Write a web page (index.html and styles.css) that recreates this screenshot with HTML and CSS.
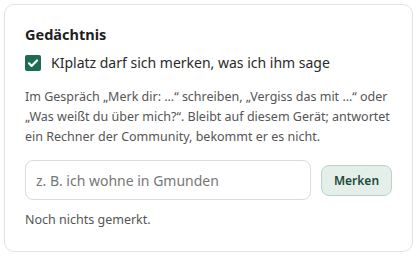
FILE: index.html
```html
<!DOCTYPE html>
<html lang="de">
<head>
  <meta charset="UTF-8">
  <title>Gedächtnis</title>
  <link rel="stylesheet" href="styles.css">
</head>
<body>
  <div class="card">
    <h3 class="card-title">Gedächtnis</h3>
    <label class="check-row">
      <input type="checkbox" class="check" checked>
      <span class="check-box"><svg viewBox="0 0 16 16" width="16" height="16"><path d="M4 8.3l2.6 2.6L12 5.4" fill="none" stroke="#fff" stroke-width="2.2" stroke-linecap="round" stroke-linejoin="round"/></svg></span>
      <span>KIplatz darf sich merken, was ich ihm sage</span>
    </label>
    <p class="hint">Im Gespräch „Merk dir: …“ schreiben, „Vergiss das mit …“ oder „Was weißt du über mich?“. Bleibt auf diesem Gerät; antwortet ein Rechner der Community, bekommt er es nicht.</p>
    <div class="add-row">
      <input type="text" class="memory-input" placeholder="z. B. ich wohne in Gmunden">
      <button class="btn-save">Merken</button>
    </div>
    <div class="status">Noch nichts gemerkt.</div>
  </div>
</body>
</html>
```

FILE: styles.css
```css
body {
  margin: 4px;
  font-family: "Noto Sans", "Open Sans", sans-serif;
  background: #fff;
  color: #222;
}
.card {
  width: 367px;
  height: 207px;
  border: 1px solid #dfe3e2;
  border-radius: 10px;
  padding: 19px 20px 20px 20px;
}
.card-title {
  margin: 0 0 8px 0;
  font-size: 14.5px;
  font-weight: 700;
  line-height: 20px;
  color: #1e1e1e;
}
.check-row {
  display: flex;
  align-items: center;
  gap: 10px;
  font-size: 14px;
  line-height: 22px;
  color: #2a2a2a;
}
.check {
  display: none;
}
.check-box {
  width: 16px;
  height: 16px;
  border-radius: 2px;
  background: #1e6b52;
  display: flex;
}
.hint {
  margin: 13px 0 0 0;
  font-size: 12.5px;
  line-height: 20px;
  color: #555;
}
.add-row {
  display: flex;
  align-items: center;
  gap: 10px;
  margin-top: 13px;
}
.memory-input {
  width: 286px;
  height: 40px;
  box-sizing: border-box;
  border: 1px solid #d9dedd;
  border-radius: 8px;
  padding: 0 10px;
  font-family: inherit;
  font-size: 14px;
  color: #222;
}
.memory-input::placeholder {
  color: #777;
}
.btn-save {
  width: 71px;
  height: 31px;
  border: 1px solid #b9d3c8;
  border-radius: 8px;
  background: #e4efea;
  color: #1e4a3a;
  font-family: inherit;
  font-size: 12px;
  font-weight: 600;
}
.status {
  margin-top: 10px;
  font-size: 12.5px;
  line-height: 20px;
  color: #555;
}
```
